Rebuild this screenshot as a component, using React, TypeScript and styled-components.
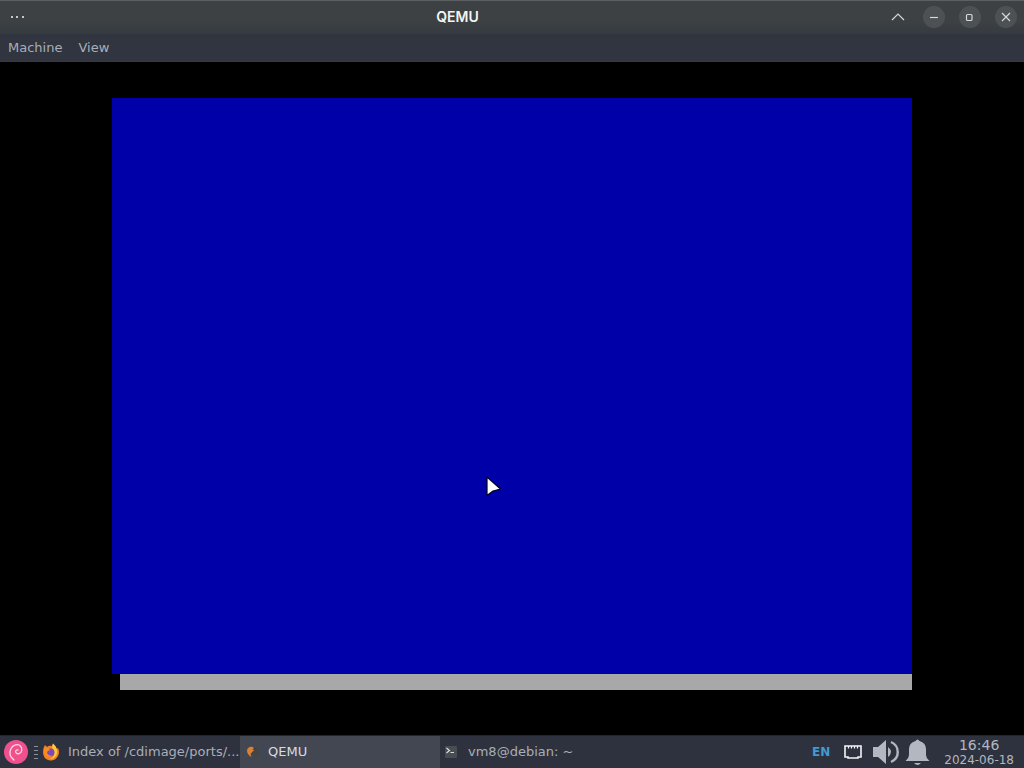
import React from "react";
import styled, { createGlobalStyle } from "styled-components";

const GlobalStyle = createGlobalStyle`
  * { box-sizing: border-box; }
  body {
    margin: 0;
    background: #000;
    font-family: "DejaVu Sans", sans-serif;
    font-size: 13px;
    color: #a9aeb8;
  }
  button { font: inherit; color: inherit; border: 0; padding: 0; background: none; }
  svg { display: block; flex: none; }
`;

const Desktop = styled.div`
  min-height: 100vh;
  display: flex;
  flex-direction: column;
`;

const TitleBar = styled.header`
  height: 34px;
  padding: 0 7px 0 8px;
  display: flex;
  align-items: center;
  box-shadow: inset 0 1px #5b6063;
  background: linear-gradient(#3d4143 60%, #363b42);
`;

const Title = styled.h1`
  flex: 1;
  margin: 0;
  text-align: center;
  font: 600 14px/20px Inter, sans-serif;
  color: #f3f4f5;
`;

const AppMenu = styled.button`
  width: 20px;
  height: 20px;
  color: #c5c8ca;
`;

const WindowControls = styled.div`
  display: flex;
  gap: 14px;
`;

const WindowButton = styled.button<{ $flat?: boolean }>`
  width: 22px;
  height: 22px;
  border-radius: 50%;
  background: ${(p) => (p.$flat ? "transparent" : "#4d5154")};
  color: #d5d7d9;
`;

const MenuBar = styled.nav`
  height: 28px;
  padding: 0 8px;
  display: flex;
  align-items: center;
  gap: 16px;
  background: linear-gradient(#31353f, #303541);
  border-bottom: 1px solid #343944;
`;

const MenuItem = styled.button`
  line-height: 20px;
`;

const Viewport = styled.main`
  flex: 1;
  display: flex;
  align-items: center;
  justify-content: center;
`;

const GuestScreen = styled.div`
  position: relative;
  width: 100%;
  max-width: 800px;
  padding-bottom: 9px;
`;

const BluePanel = styled.div`
  aspect-ratio: 800 / 576;
  background: #0000a8;
`;

const PanelShadow = styled.div`
  height: 16px;
  margin-left: 8px;
  background: #a8a8a8;
`;

const Pointer = styled.svg`
  position: absolute;
  left: 373px;
  top: 377px;
`;

const Taskbar = styled.footer`
  height: 33px;
  display: flex;
  align-items: center;
  border-top: 1px solid #22252d;
  background: #2e323e;
`;

const Launcher = styled.button`
  padding: 0 4px;
`;

const Handle = styled.div`
  width: 4px;
  height: 13px;
  margin: 0 2px;
  background: repeating-linear-gradient(#8b8f98 0 1px, transparent 1px 4px);
`;

const Tasks = styled.div`
  flex: 1;
  display: flex;
  align-self: stretch;
  min-width: 0;
`;

const Task = styled.button<{ $active?: boolean }>`
  flex: 0 1 200px;
  min-width: 0;
  display: flex;
  align-items: center;
  gap: 8px;
  padding: 0 0 0 2px;
  text-align: left;
  background: ${(p) => (p.$active ? "#424752" : "transparent")};
  color: ${(p) => (p.$active ? "#d9dce2" : "#a9aeb8")};
`;

const TaskLabel = styled.span`
  overflow: hidden;
  white-space: nowrap;
  text-overflow: ellipsis;
  line-height: 20px;
`;

const Tray = styled.div`
  display: flex;
  align-items: center;
  color: #b2b7c0;
`;

const Language = styled.button`
  margin-right: 14px;
  && {
    font-weight: bold;
    font-size: 12px;
    color: #409bd2;
  }
`;

const TrayButton = styled.button<{ $gap: number }>`
  margin-right: ${(p) => p.$gap}px;
`;

const Clock = styled.div`
  padding-right: 10px;
  text-align: center;
  font-size: 12px;
  line-height: 15px;
  color: #b2b7c0;
`;

const Time = styled.time`
  display: block;
  font-size: 14px;
  line-height: 16px;
`;

const controls = [
  { label: "Keep above", flat: true, d: "M5 14 L11 8 L17 14" },
  { label: "Minimize", d: "M7 11.5 H15" },
  { label: "Restore", d: "M7.5 9.5 Q7.5 8.5 8.5 8.5 H12 Q13 8.5 13 9.5 V13.5 Q13 14.5 12 14.5 H8.5 Q7.5 14.5 7.5 13.5 Z" },
  { label: "Close", d: "M7 7 L15 15 M15 7 L7 15" },
];

const DebianIcon = () => (
  <svg width="24" height="24" viewBox="0 0 24 24">
    <circle cx="12" cy="12" r="12" fill="#f0508c" />
    <path
      d="M10 20 C6.2 17 5 12.8 6.8 9 C8.8 4.8 14 3.4 16.6 6.2 C18.8 8.9 17.8 12.6 15 13.6 C13 14.2 11.3 13 11.7 11.2 C12 10 13 9.6 14 10"
      fill="none"
      stroke="#ffd9e8"
      strokeWidth="1.3"
      strokeLinecap="round"
    />
  </svg>
);

const FirefoxIcon = () => (
  <svg width="18" height="18" viewBox="0 0 18 18">
    <path d="M2 4 L3 2 L5 4 Q7 2 10 3 L11 0.5 Q14 3 15 6 L16 5 Q18 9 16 13 Q13 18 8 17.5 Q1 16.5 1 9 Q1 6 2 4Z" fill="#f6821f" />
    <path d="M11 0.5 Q17 6 14.5 12 Q12 16 8 16 Q13 13 12 8 Q9 5 11 0.5Z" fill="#ffc83c" />
    <circle cx="8.5" cy="9.5" r="4" fill="#7c49b5" />
    <path d="M2 6 Q5 3.5 7 6 L8.5 7 Q5 7.5 5 10 Q6.5 13.5 11 12.5 Q8 15 4 13 Q1.5 10 2 6Z" fill="#fa8a25" />
  </svg>
);

const QemuIcon = () => (
  <svg width="18" height="18" viewBox="0 0 18 18">
    <path d="M9 4 Q15 3 16 9 Q16 12 14 14 L10 10Z" fill="#454544" />
    <path d="M11 4 Q6 3 5 7.5 Q5 11.5 9.5 14 L8.5 11 Q10.5 8 12 7.5 L10.5 6 Q12.5 5.5 11 4Z" fill="#dc8133" />
  </svg>
);

const TerminalIcon = () => (
  <svg width="18" height="18" viewBox="0 0 18 18">
    <rect x="3" y="3" width="12" height="12" rx="1" fill="#474e52" />
    <path d="M4.5 5 L7.5 7.5 L4.5 10 M8.5 9.5 H12" fill="none" stroke="#d9dddd" strokeWidth="1.2" />
  </svg>
);

export default function App() {
  return (
    <>
      <GlobalStyle />
      <Desktop>
        <TitleBar>
          <AppMenu aria-label="Window menu">
            <svg width="20" height="20" fill="currentColor">
              <rect x="3" y="9" width="2" height="2" />
              <rect x="8" y="9" width="2" height="2" />
              <rect x="14" y="9" width="2" height="2" />
            </svg>
          </AppMenu>
          <Title>QEMU</Title>
          <WindowControls>
            {controls.map((c) => (
              <WindowButton key={c.label} $flat={c.flat} aria-label={c.label}>
                <svg width="22" height="22" fill="none" stroke="currentColor" strokeWidth="1.2">
                  <path d={c.d} />
                </svg>
              </WindowButton>
            ))}
          </WindowControls>
        </TitleBar>
        <MenuBar>
          <MenuItem>Machine</MenuItem>
          <MenuItem>View</MenuItem>
        </MenuBar>
        <Viewport>
          <GuestScreen>
            <BluePanel />
            <PanelShadow />
            <Pointer width="18" height="24" viewBox="0 0 18 24">
              <path d="M2 2 L15.5 14 L8 16 L2 20.5 Z" fill="#fff" stroke="#00001c" strokeWidth="1.2" strokeLinejoin="round" />
            </Pointer>
          </GuestScreen>
        </Viewport>
        <Taskbar>
          <Launcher aria-label="Applications">
            <DebianIcon />
          </Launcher>
          <Handle />
          <Tasks>
            <Task>
              <FirefoxIcon />
              <TaskLabel>Index of /cdimage/ports/...</TaskLabel>
            </Task>
            <Task $active>
              <QemuIcon />
              <TaskLabel>QEMU</TaskLabel>
            </Task>
            <Task>
              <TerminalIcon />
              <TaskLabel>vm8@debian: ~</TaskLabel>
            </Task>
          </Tasks>
          <Tray>
            <Language>EN</Language>
            <TrayButton $gap={11} aria-label="Network">
              <svg width="18" height="16" viewBox="0 0 18 16">
                <path d="M1 2 H17 V13 H14 V14 H4 V13 H1 Z" fill="none" stroke="#f4f5f6" strokeWidth="1.6" />
                <path d="M4.5 2 V4.5 M7.5 2 V4.5 M10.5 2 V4.5 M13.5 2 V4.5" stroke="#f4f5f6" strokeWidth="1.2" />
              </svg>
            </TrayButton>
            <TrayButton $gap={5} aria-label="Volume">
              <svg width="27" height="26" viewBox="0 0 27 26">
                <path d="M0 8 H5 L13 1 V25 L5 18 H0Z" fill="currentColor" />
                <path d="M15 8 Q21 13 15 18Z" fill="currentColor" />
                <path d="M18 3 C27 7 27 19 18 23" fill="none" stroke="currentColor" strokeWidth="2.4" />
              </svg>
            </TrayButton>
            <TrayButton $gap={14} aria-label="Notifications">
              <svg width="25" height="26" viewBox="0 0 25 26">
                <path d="M10.5 2 Q12.5 -1 14.5 2 Q21 4 21 10 V16 Q21 19 24.5 22 H0.5 Q4 19 4 16 V10 Q4 4 10.5 2Z" fill="currentColor" />
                <path d="M9 24 H16 Q12.5 28 9 24Z" fill="currentColor" />
              </svg>
            </TrayButton>
            <Clock>
              <Time>16:46</Time>
              <time>2024-06-18</time>
            </Clock>
          </Tray>
        </Taskbar>
      </Desktop>
    </>
  );
}
